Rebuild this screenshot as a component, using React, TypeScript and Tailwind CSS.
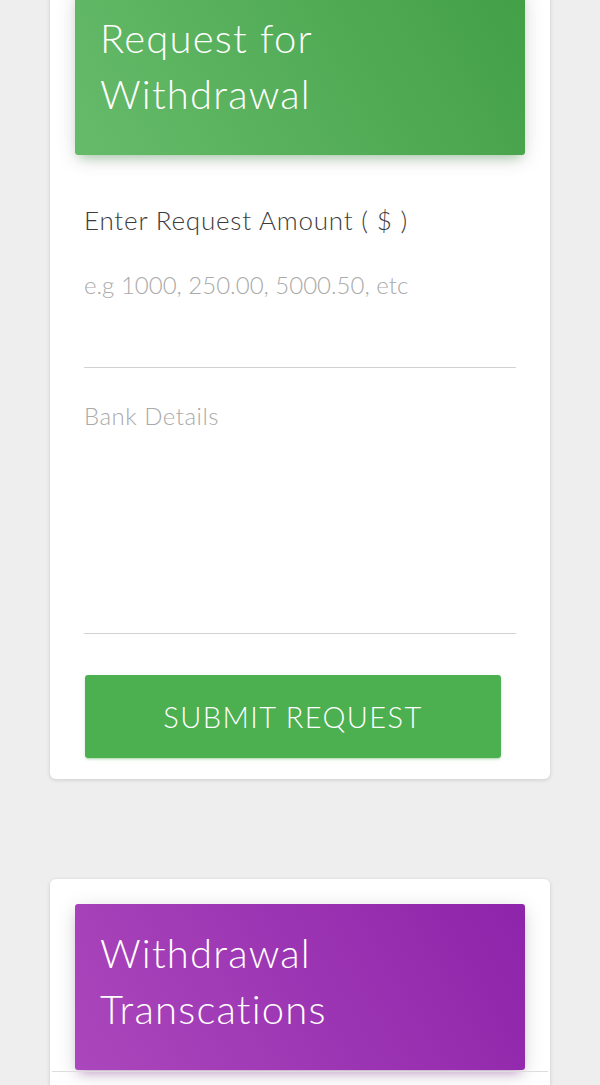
import React from "react";

export default function App() {
  const font = { fontFamily: "Lato, 'Noto Sans', sans-serif" };
  return (
    <div className="min-h-[1085px] w-[600px] bg-[#eeeeee] overflow-hidden" style={font}>
      <div className="mx-[50px] mt-[-36px] rounded-md bg-white px-[25px] pt-[25px] pb-[21px] shadow-[0_1px_4px_0_rgba(0,0,0,0.14)]">
        <div className="h-[166px] rounded-[3px] bg-[linear-gradient(60deg,#66bb6a,#43a047)] px-[25px] pt-[21px] shadow-[0_4px_20px_0px_rgba(0,0,0,0.14),0_7px_10px_-5px_rgba(76,175,80,0.4)]">
          <h4 className="text-[40px] leading-[56px] font-light tracking-[1.2px] text-white">
            Request for
            <br />
            Withdrawal
          </h4>
        </div>
        <div className="px-[9px]">
          <div className="mt-[50px] text-[26px] leading-[1.2] font-light tracking-[0.8px] text-[#3c3c3c]">
            Enter Request Amount ( $ )
          </div>
          <div className="h-[132px] border-b border-[#d2d2d2] pt-[35px] text-[24px] leading-[1.2] font-light text-[#aaaaaa]">
            e.g 1000, 250.00, 5000.50, etc
          </div>
          <div className="h-[266px] border-b border-[#d2d2d2] pt-[34px] text-[24px] leading-[1.2] font-light tracking-[0.5px] text-[#aaaaaa]">
            Bank Details
          </div>
        </div>
        <button className="mt-[41px] ml-[10px] flex h-[83px] w-[416px] items-center justify-center rounded-[3px] bg-[#4caf50] text-[29px] font-light tracking-[1.4px] text-white shadow-[0_2px_2px_0_rgba(76,175,80,0.14),0_3px_1px_-2px_rgba(76,175,80,0.2),0_1px_5px_0_rgba(76,175,80,0.12)]">
          SUBMIT REQUEST
        </button>
      </div>

      <div className="mx-[50px] mt-[100px] rounded-md bg-white px-[25px] pt-[25px] shadow-[0_1px_4px_0_rgba(0,0,0,0.14)]">
        <div className="h-[166px] rounded-[3px] bg-[linear-gradient(60deg,#ab47bc,#8e24aa)] px-[25px] pt-[21px] shadow-[0_4px_20px_0px_rgba(0,0,0,0.14),0_7px_10px_-5px_rgba(156,39,176,0.4)]">
          <h4 className="text-[40px] leading-[56px] font-light tracking-[1.2px] text-white">
            Withdrawal
            <br />
            Transcations
          </h4>
        </div>
        <div className="mx-[-23px] mt-px h-[40px] border-t border-[#dddddd]"></div>
      </div>
    </div>
  );
}
